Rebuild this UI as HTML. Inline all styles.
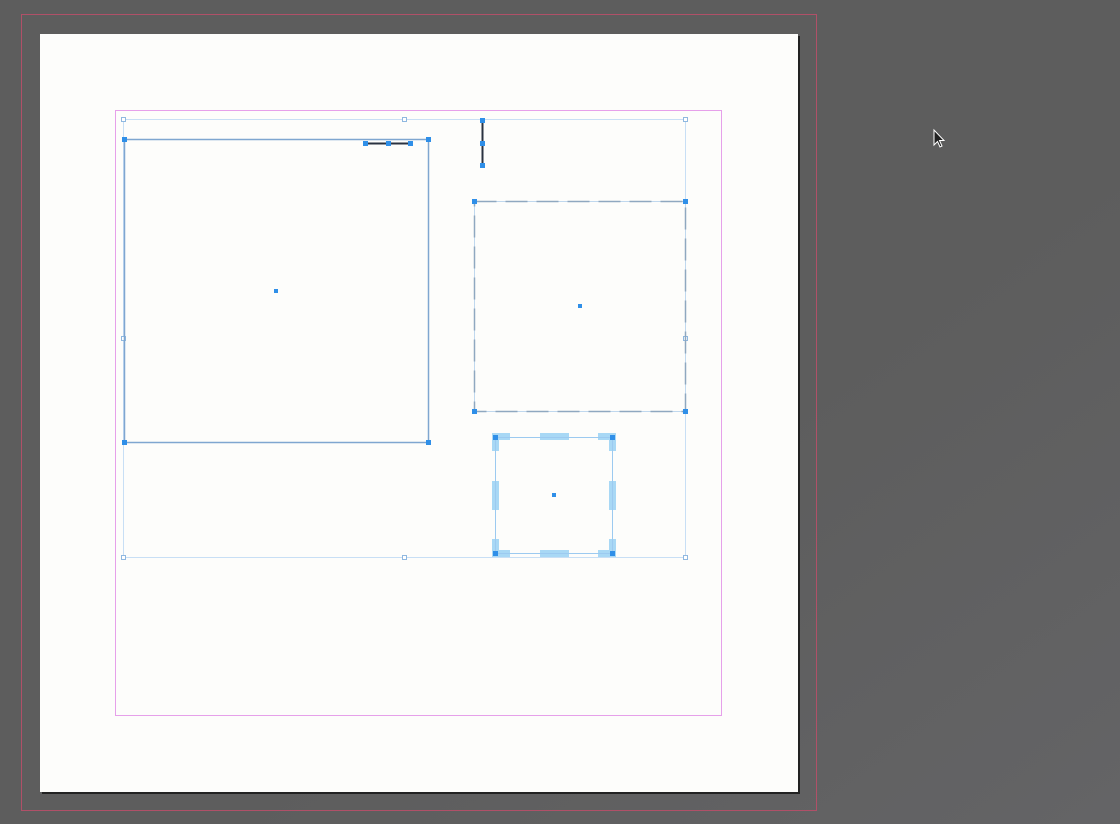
<html><head><style>body{margin:0;background:#5e5e5e;width:1120px;height:824px;overflow:hidden}</style></head><body>
<svg width="1120" height="824" xmlns="http://www.w3.org/2000/svg">
<defs><linearGradient id="g" x1="0" y1="0" x2="1" y2="1"><stop offset="0.6" stop-color="#5d5d5d"/><stop offset="1" stop-color="#646466"/></linearGradient></defs>
<rect width="1120" height="824" fill="url(#g)"/>
<rect x="42" y="36" width="758" height="758" fill="#222"/>
<rect x="40" y="34" width="758" height="758" fill="#fdfdfb"/>
<rect x="21.5" y="14.5" width="795" height="796" fill="none" stroke="#b05068" stroke-width="1"/>
<rect x="115.5" y="110.5" width="606" height="605" fill="none" stroke="#e6a0ea" stroke-width="1"/>
<g fill="none" stroke="#c8dff5" stroke-width="1">
<rect x="123.5" y="119.5" width="562" height="438"/>
</g>
<g fill="#fff" stroke="#8fb8e0">
<rect x="121.5" y="117.5" width="4" height="4"/><rect x="402.5" y="117.5" width="4" height="4"/><rect x="683.5" y="117.5" width="4" height="4"/>
<rect x="121.5" y="336.5" width="4" height="4"/><rect x="683.5" y="336.5" width="4" height="4"/>
<rect x="121.5" y="555.5" width="4" height="4"/><rect x="402.5" y="555.5" width="4" height="4"/><rect x="683.5" y="555.5" width="4" height="4"/>
</g>
<rect x="124.5" y="139.5" width="304" height="303" fill="none" stroke="#7fa6d0" stroke-width="1.5"/>
<line x1="365" y1="143.5" x2="411" y2="143.5" stroke="#2a3240" stroke-width="2"/>
<line x1="482.5" y1="120" x2="482.5" y2="165" stroke="#2a3240" stroke-width="2"/>
<rect x="474.5" y="201.5" width="211" height="210" fill="none" stroke="#c0d8ee" stroke-width="1"/>
<rect x="474.5" y="201.5" width="211" height="210" fill="none" stroke="#8fa8c0" stroke-width="1.5" stroke-dasharray="22 9"/>
<g fill="#a8d8f5"><rect x="492" y="433" width="18" height="7"/><rect x="540" y="433" width="29" height="7"/><rect x="598" y="433" width="18" height="7"/>
<rect x="492" y="433" width="7" height="18"/><rect x="609" y="433" width="7" height="18"/>
<rect x="492" y="481" width="7" height="29"/><rect x="609" y="481" width="7" height="29"/>
<rect x="492" y="539" width="7" height="18"/><rect x="609" y="539" width="7" height="18"/>
<rect x="492" y="550" width="18" height="7"/><rect x="540" y="550" width="29" height="7"/><rect x="598" y="550" width="18" height="7"/></g>
<rect x="495.5" y="437.5" width="117" height="116" fill="none" stroke="#9ccaf0" stroke-width="1"/>
<g fill="#2f8fe8">
<rect x="122" y="137" width="5" height="5"/><rect x="426" y="137" width="5" height="5"/><rect x="122" y="440" width="5" height="5"/><rect x="426" y="440" width="5" height="5"/>
<rect x="274" y="289" width="4" height="4"/>
<rect x="363" y="141" width="5" height="5"/><rect x="386" y="141" width="5" height="5"/><rect x="408" y="141" width="5" height="5"/>
<rect x="480" y="118" width="5" height="5"/><rect x="480" y="141" width="5" height="5"/><rect x="480" y="163" width="5" height="5"/>
<rect x="472" y="199" width="5" height="5"/><rect x="683" y="199" width="5" height="5"/><rect x="472" y="409" width="5" height="5"/><rect x="683" y="409" width="5" height="5"/>
<rect x="578" y="304" width="4" height="4"/>
<rect x="493" y="435" width="5" height="5"/><rect x="610" y="435" width="5" height="5"/><rect x="493" y="551" width="5" height="5"/><rect x="610" y="551" width="5" height="5"/>
<rect x="552" y="493" width="4" height="4"/>
</g>
<path d="M934 130 L934 145 L937.5 141.5 L940 147 L942 146 L939.5 140.5 L944 140.5 Z" fill="#222" stroke="#fff" stroke-width="1"/>
</svg>
</body></html>
